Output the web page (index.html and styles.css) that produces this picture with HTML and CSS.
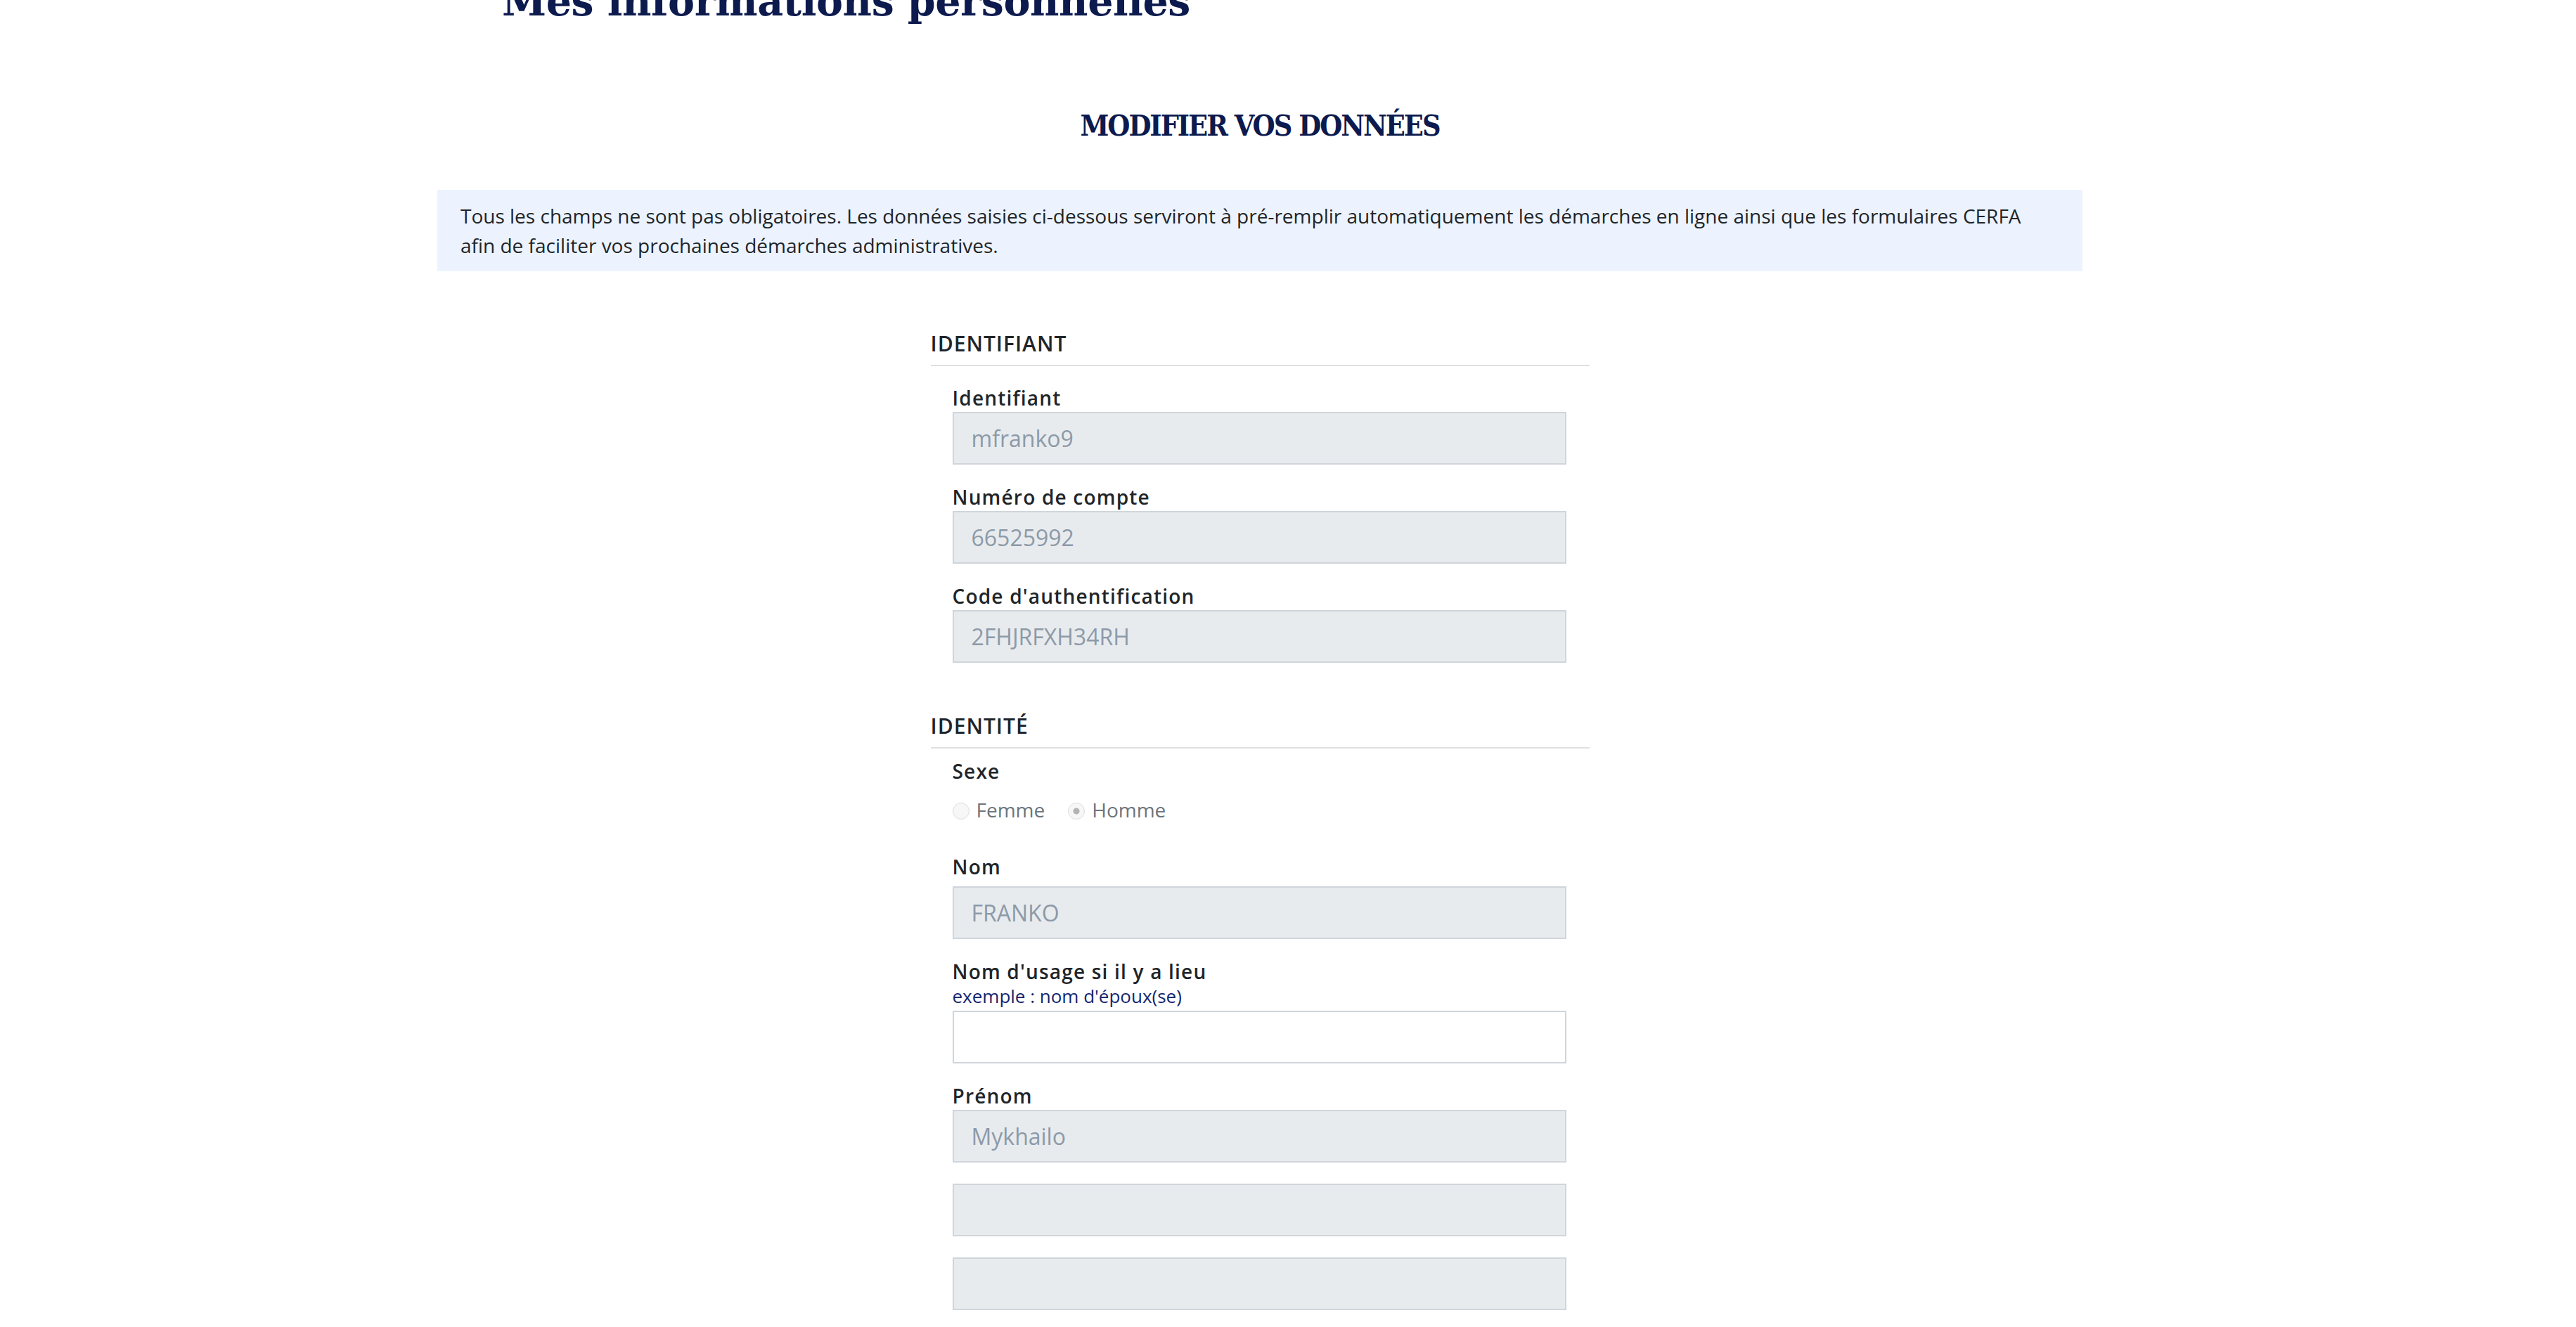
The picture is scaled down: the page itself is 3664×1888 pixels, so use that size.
FILE: index.html
```html
<!DOCTYPE html>
<html lang="fr">
<head>
<meta charset="utf-8">
<title>Mes informations personnelles</title>
<link rel="stylesheet" href="styles.css">
</head>
<body>
<div class="page">
  <div class="container">
    <h1 class="page-title">Mes informations personnelles</h1>
    <h2 class="form-title">MODIFIER VOS DONNÉES</h2>
    <div class="info-box">
      Tous les champs ne sont pas obligatoires. Les données saisies ci-dessous serviront à pré-remplir automatiquement les démarches en ligne ainsi que les formulaires CERFA afin de faciliter vos prochaines démarches administratives.
    </div>

    <form class="form">
      <section class="section">
        <h3 class="section-title">IDENTIFIANT</h3>
        <div class="section-body section-body-first">
          <div class="field">
            <label class="label" for="login">Identifiant</label>
            <input class="input" id="login" type="text" value="mfranko9" disabled>
          </div>
          <div class="field">
            <label class="label" for="account">Numéro de compte</label>
            <input class="input" id="account" type="text" value="66525992" disabled>
          </div>
          <div class="field">
            <label class="label" for="code">Code d'authentification</label>
            <input class="input" id="code" type="text" value="2FHJRFXH34RH" disabled>
          </div>
        </div>
      </section>

      <section class="section">
        <h3 class="section-title">IDENTITÉ</h3>
        <div class="section-body section-body-tight">
          <div class="field field-radio">
            <span class="label">Sexe</span>
            <div class="radio-row">
              <label class="radio-option"><input class="radio" type="radio" name="sexe" disabled><span>Femme</span></label>
              <label class="radio-option"><input class="radio" type="radio" name="sexe" checked disabled><span>Homme</span></label>
            </div>
          </div>
          <div class="field">
            <label class="label label-spaced" for="nom">Nom</label>
            <input class="input" id="nom" type="text" value="FRANKO" disabled>
          </div>
          <div class="field">
            <label class="label" for="usage">Nom d'usage si il y a lieu</label>
            <span class="hint">exemple : nom d'époux(se)</span>
            <input class="input input-editable" id="usage" type="text" value="">
          </div>
          <div class="field field-group">
            <label class="label" for="prenom">Prénom</label>
            <input class="input" id="prenom" type="text" value="Mykhailo" disabled>
          </div>
          <div class="field field-group">
            <input class="input" type="text" value="" disabled aria-label="Deuxième prénom">
          </div>
          <div class="field field-group">
            <input class="input" type="text" value="" disabled aria-label="Troisième prénom">
          </div>
        </div>
      </section>
    </form>
  </div>
</div>
</body>
</html>
```

FILE: styles.css
```css
* {
  box-sizing: border-box;
}

html, body {
  margin: 0;
  padding: 0;
  background: #ffffff;
}

body {
  font-family: "Open Sans", "Noto Sans", "Liberation Sans", sans-serif;
  color: #212529;
  overflow: hidden;
}

.page {
  width: 3584px;
}

.container {
  width: 2340px;
  margin: 0 auto;
}

.page-title {
  margin: -33px 0 0 0;
  padding-left: 92px;
  font-family: "DejaVu Serif", serif;
  font-weight: 700;
  font-size: 57px;
  line-height: 70px;
  letter-spacing: -0.4px;
  color: #0c1a4e;
}

.form-title {
  margin: 118px 0 0 0;
  text-align: center;
  font-family: "DejaVu Serif Condensed", "DejaVu Serif", serif;
  font-stretch: condensed;
  font-weight: 700;
  font-size: 41px;
  line-height: 49px;
  letter-spacing: -2px;
  color: #0c1a4e;
}

.info-box {
  margin-top: 66px;
  background: #ecf3fe;
  padding: 16px 33px;
  font-size: 28px;
  line-height: 42px;
  color: #212529;
}

.form {
  width: 937px;
  margin: 80px auto 0;
}

.section {
  margin-bottom: 67px;
}

.section-title {
  margin: 0;
  padding-bottom: 8px;
  border-bottom: 2px solid #dee0e2;
  font-size: 30px;
  line-height: 45px;
  font-weight: 600;
  letter-spacing: 1px;
  color: #212529;
}

.section-body {
  padding: 26px 33px 0 31px;
}

.section-body-tight {
  padding-top: 13px;
}

.field {
  display: flex;
  flex-direction: column;
  margin-bottom: 27px;
}

.field-group {
  margin-bottom: 30px;
}

.label {
  display: block;
  font-size: 28px;
  line-height: 39px;
  font-weight: 600;
  letter-spacing: 1.2px;
  color: #212529;
}

.label-spaced {
  margin-bottom: 8px;
}

.hint {
  display: block;
  font-size: 26px;
  line-height: 30px;
  margin-bottom: 6px;
  color: #15266f;
}

.input {
  display: block;
  width: 100%;
  height: 75px;
  margin: 0;
  padding: 0 25px;
  border: 2px solid #cfd5db;
  border-radius: 0;
  background: #e8ebee;
  font-family: "Open Sans", "Noto Sans", sans-serif;
  font-size: 32px;
  color: #8c9aa8;
  outline: none;
}

.input-editable {
  background: #ffffff;
}

.field-radio {
  margin-bottom: 41px;
}

.radio-row {
  display: flex;
  align-items: center;
  gap: 33px;
  margin-top: 14px;
  height: 42px;
}

.radio-option {
  display: flex;
  align-items: center;
  gap: 10px;
  font-size: 28px;
  line-height: 42px;
  color: #6c757d;
}

.radio {
  appearance: none;
  -webkit-appearance: none;
  width: 24px;
  height: 24px;
  margin: 0;
  border-radius: 50%;
  border: 1px solid #dcdcdc;
  background: #f7f7f7;
  position: relative;
  top: 2px;
}

.radio:checked {
  background: radial-gradient(circle, #b3b3b3 0 4px, #f7f7f7 5px);
}
```
